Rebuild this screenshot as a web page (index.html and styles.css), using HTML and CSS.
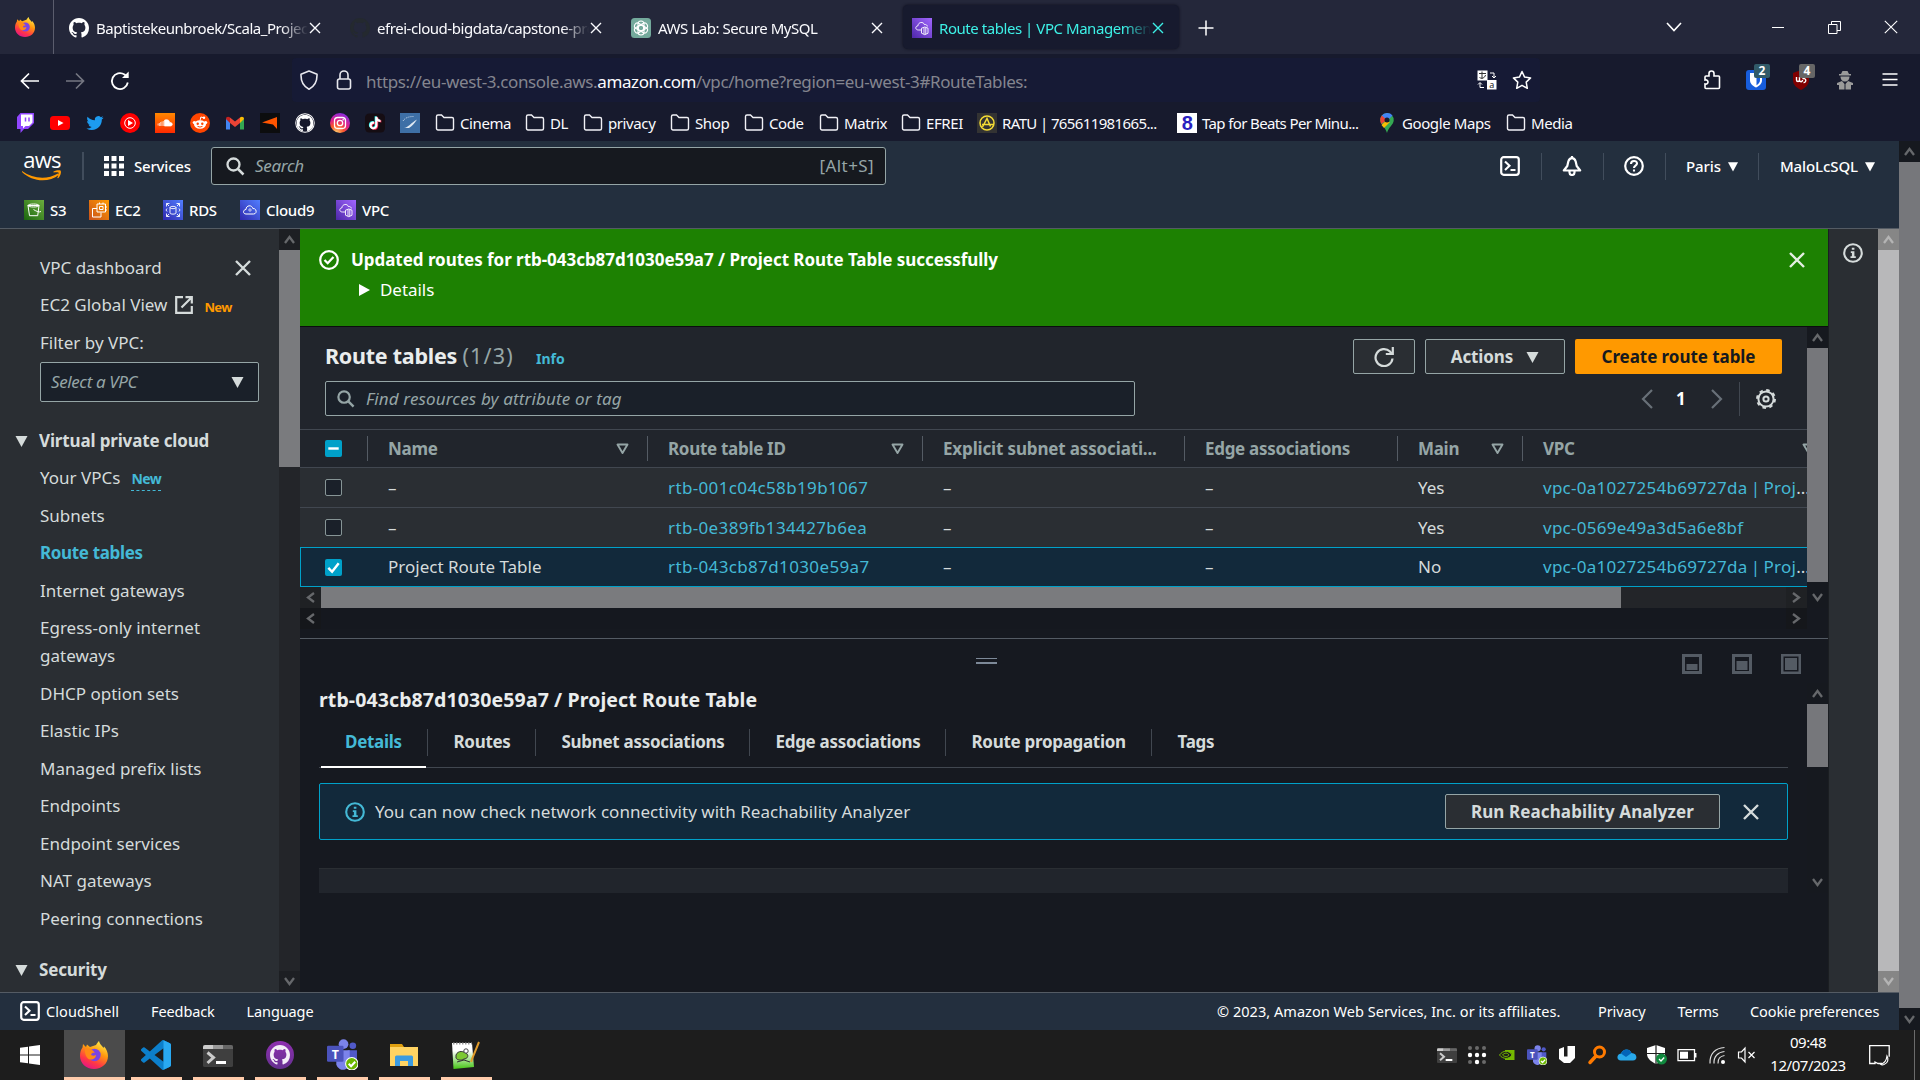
FILE: index.html
```html
<!DOCTYPE html>
<html lang="en">
<head>
<meta charset="utf-8">
<title>Route tables | VPC Management Console</title>
<link rel="stylesheet" href="styles.css">
</head>
<body>
<svg class="defs" width="0" height="0" aria-hidden="true">
  <defs>
    <linearGradient id="g-ff" x1=".8" y1="0" x2=".3" y2="1"><stop offset="0" stop-color="#fff44f"/><stop offset=".4" stop-color="#ff980e"/><stop offset=".75" stop-color="#ff3647"/><stop offset="1" stop-color="#e31587"/></linearGradient>
    <linearGradient id="g-vpc" x1="0" y1="1" x2="1" y2="0"><stop offset="0" stop-color="#4d27a8"/><stop offset="1" stop-color="#a166ff"/></linearGradient>
    <linearGradient id="g-s3" x1="0" y1="1" x2="1" y2="0"><stop offset="0" stop-color="#1b660f"/><stop offset="1" stop-color="#6cae3e"/></linearGradient>
    <linearGradient id="g-ec2" x1="0" y1="1" x2="1" y2="0"><stop offset="0" stop-color="#c8511b"/><stop offset="1" stop-color="#ff9900"/></linearGradient>
    <linearGradient id="g-rds" x1="0" y1="1" x2="1" y2="0"><stop offset="0" stop-color="#2e27ad"/><stop offset="1" stop-color="#527fff"/></linearGradient>
    <linearGradient id="g-sc" x1="0" y1="0" x2="0" y2="1"><stop offset="0" stop-color="#ff8800"/><stop offset="1" stop-color="#ff2a00"/></linearGradient>
    <radialGradient id="g-ig" cx=".3" cy="1" r="1.1"><stop offset="0" stop-color="#fed373"/><stop offset=".35" stop-color="#f9572b"/><stop offset=".6" stop-color="#e0218a"/><stop offset="1" stop-color="#7a2ff0"/></radialGradient>
    <linearGradient id="g-gd" x1="0" y1="0" x2="0" y2="1"><stop offset="0" stop-color="#8e2fb0"/><stop offset="1" stop-color="#65308f"/></linearGradient>
    <linearGradient id="g-npp" x1="0" y1="0" x2="0" y2="1"><stop offset=".3" stop-color="#fff"/><stop offset="1" stop-color="#45c515"/></linearGradient>

    <symbol id="firefox" viewBox="0 0 28 28">
      <path d="M16 4C17 2 18 1 19 0c.4 3 3 4.500 4.500 7l.6-1.500C26.500 8 28 11.500 28 15c0 7.500-6 13-14 13S0 22 0 15c0-4 1.200-7 2.500-8.500L3 3l3 3 1-2.500L10 6z" fill="url(#g-ff)"/>
      <circle cx="14.500" cy="14" r="6.200" fill="#7a45e5"/>
      <path d="M5 8c4-1.500 8 .5 10 4-2-.5-3 0-4 1.500 1 1.500 3 1.500 5 .500 0 3-3 5-6 4.500C6 17.500 4.500 12 5 8z" fill="#ff8a16"/>
    </symbol>
    <symbol id="github" viewBox="0 0 16 16"><path d="M8 0C3.580 0 0 3.580 0 8c0 3.540 2.290 6.530 5.470 7.590.4.07.55-.17.55-.38 0-.19-.01-.82-.01-1.490-2.010.37-2.530-.49-2.690-.94-.09-.23-.48-.94-.82-1.130-.28-.15-.68-.52-.01-.53.63-.01 1.080.58 1.230.82.72 1.210 1.870.87 2.330.66.07-.52.28-.87.51-1.070-1.780-.2-3.640-.89-3.640-3.950 0-.87.31-1.590.82-2.150-.08-.2-.36-1.020.08-2.120 0 0 .67-.21 2.200.82.64-.18 1.320-.27 2-.27s1.360.09 2 .27c1.530-1.040 2.200-.82 2.200-.82.44 1.100.16 1.920.08 2.120.51.56.82 1.270.82 2.150 0 3.070-1.870 3.750-3.650 3.950.29.25.54.73.54 1.480 0 1.070-.01 1.930-.01 2.200 0 .21.15.46.55.38A8.010 8.010 0 0 0 16 8c0-4.420-3.580-8-8-8z" fill="currentColor"/></symbol>
    <symbol id="openai" viewBox="0 0 20 20"><rect width="20" height="20" rx="3.500" fill="#74aa9c"/><g fill="none" stroke="#fff" stroke-width="1.100"><rect x="7" y="3" width="6" height="10" rx="3"/><rect x="7" y="3" width="6" height="10" rx="3" transform="rotate(60 10 10)"/><rect x="7" y="3" width="6" height="10" rx="3" transform="rotate(120 10 10)"/><rect x="7" y="3" width="6" height="10" rx="3" transform="rotate(180 10 10)"/><rect x="7" y="3" width="6" height="10" rx="3" transform="rotate(240 10 10)"/><rect x="7" y="3" width="6" height="10" rx="3" transform="rotate(300 10 10)"/></g></symbol>
    <symbol id="vpc" viewBox="0 0 20 20"><rect width="20" height="20" fill="url(#g-vpc)"/><g fill="none" stroke="#fff" stroke-width=".9"><path d="M9 12H6.500C3 12 3 8 6 7.800 6 4 11.500 3.300 12.300 6.500c2-.3 3 .8 3 2"/><path d="M9.500 10.200l3.300-1.200 3.200 1.200v5l-3.200 1.500-3.300-1.500zM12 9.500v6.700M13.800 9.500v6.700"/></g></symbol>
    <symbol id="x" viewBox="0 0 12 12"><path d="M1 1l10 10M11 1L1 11" stroke="currentColor" stroke-width="1.400" fill="none"/></symbol>
    <symbol id="xb" viewBox="0 0 18 18"><path d="M2 2l14 14M16 2L2 16" stroke="currentColor" stroke-width="2.400" fill="none"/></symbol>
    <symbol id="folder" viewBox="0 0 20 20"><path d="M1.500 15.500v-12a1.500 1.500 0 0 1 1.500-1.500h3.500l2.500 2.500h8a1.500 1.500 0 0 1 1.500 1.500v9.500a1.500 1.500 0 0 1-1.500 1.500h-14a1.500 1.500 0 0 1-1.500-1.500z" fill="none" stroke="#f1f1f6" stroke-width="1.400"/></symbol>
    <symbol id="tri" viewBox="0 0 12 12"><path d="M0 1h12L6 12z" fill="currentColor"/></symbol>
    <symbol id="trio" viewBox="0 0 13 12"><path d="M1.500 1.500h10l-5 8.500z" fill="none" stroke="currentColor" stroke-width="1.900" stroke-linejoin="round"/></symbol>
    <symbol id="mag" viewBox="0 0 20 20"><circle cx="8.500" cy="8.500" r="6" fill="none" stroke="currentColor" stroke-width="2.300"/><path d="M13 13l5.500 5.500" stroke="currentColor" stroke-width="2.500"/></symbol>
    <symbol id="shell" viewBox="0 0 20 20"><rect x="1.200" y="1.200" width="17.600" height="17.600" rx="2.500" fill="none" stroke="#fff" stroke-width="2.200"/><path d="M5 5.500l4.500 4.200L5 14M10.500 14h5" fill="none" stroke="#fff" stroke-width="2.100"/></symbol>
    <symbol id="info" viewBox="0 0 20 20"><circle cx="10" cy="10" r="8.800" fill="none" stroke="currentColor" stroke-width="2.100"/><path d="M8.800 4.800h2.600v2H8.800zM7.800 8.300h3.600v5h1.400v1.700H7.500v-1.700h1.400V10H7.800z" fill="currentColor"/></symbol>
    <symbol id="term" viewBox="0 0 30 24"><rect y="2" width="30" height="22" rx="1.500" fill="#3f3f3f"/><path d="M0 4a2 2 0 0 1 2-2h8v4H0z" fill="#ccc"/><path d="M10 2h10v4H10z" fill="#999"/><path d="M20 2h8a2 2 0 0 1 2 2v2H20z" fill="#666"/><path d="M4.500 9.500l6 5-6 5.500" fill="none" stroke="#ccc" stroke-width="3"/><path d="M13 19.500h10" stroke="#fff" stroke-width="3"/></symbol>
    <symbol id="teams" viewBox="0 0 30 30"><circle cx="16" cy="5" r="4.700" fill="#7b83eb"/><circle cx="25" cy="6.500" r="3.200" fill="#5059c9"/><path d="M20 11h9v9a5 5 0 0 1-9 3z" fill="#5059c9"/><path d="M9 11h13v10a6.500 6.500 0 0 1-13 4z" fill="#7b83eb"/><rect y="6.500" width="16" height="15.500" rx="1.200" fill="#4b53bc"/><text x="8" y="19" text-anchor="middle" font-family="Noto Sans" font-weight="700" font-size="12" fill="#fff">T</text><circle cx="24" cy="24" r="6" fill="#6bb700" stroke="#fff" stroke-width="1"/><path d="M21 24l2.300 2.300L27.300 22" stroke="#fff" stroke-width="2" fill="none"/></symbol>
    <symbol id="up" viewBox="0 0 11 9"><path d="M1 8l4.500-6L10 8" fill="none" stroke="currentColor" stroke-width="2.300"/></symbol>
  </defs>
</svg>

<header class="tabstrip">
  <div class="pinned"><svg width="20" height="20"><use href="#firefox"/></svg></div>
  <div class="tabs">
    <div class="tab"><svg class="white" width="20" height="20"><use href="#github"/></svg><span class="label">Baptistekeunbroek/Scala_Project</span><svg width="12" height="12"><use href="#x"/></svg></div>
    <div class="tab"><svg class="dim" width="20" height="20"><use href="#github"/></svg><span class="label">efrei-cloud-bigdata/capstone-project</span><svg width="12" height="12"><use href="#x"/></svg></div>
    <div class="tab"><svg width="20" height="20"><use href="#openai"/></svg><span class="label">AWS Lab: Secure MySQL</span><svg width="12" height="12"><use href="#x"/></svg></div>
    <div class="tab active"><svg width="20" height="20"><use href="#vpc"/></svg><span class="label">Route tables | VPC Management</span><svg width="12" height="12"><use href="#x"/></svg></div>
  </div>
  <svg class="newtab" width="16" height="16" viewBox="0 0 16 16"><path d="M8 .5v15M.5 8h15" stroke="#fff" stroke-width="1.500"/></svg>
  <div class="winctl">
    <svg width="16" height="10" viewBox="0 0 16 10"><path d="M1 1l7 7.500L15 1" fill="none" stroke="#fff" stroke-width="1.600"/></svg>
    <svg width="12" height="12" viewBox="0 0 12 12"><path d="M0 6.500h12" stroke="#fff"/></svg>
    <svg width="13" height="13" viewBox="0 0 13 13"><path d="M.5 3.500h8.500v9H.5zM3.500 3.500v-3h9v9H9" fill="none" stroke="#fff"/></svg>
    <svg width="14" height="14" viewBox="0 0 14 14"><path d="M.8.8l12.400 12.400M13.200.8L.8 13.200" stroke="#fff" stroke-width="1.100"/></svg>
  </div>
</header>

<nav class="toolbar">
  <div class="navbtns">
    <svg width="20" height="20" viewBox="0 0 20 20"><path d="M19 10H2M9 2.500L1.500 10 9 17.500" fill="none" stroke="#fff" stroke-width="1.700"/></svg>
    <svg class="faded" width="20" height="20" viewBox="0 0 20 20"><path d="M1 10h17M11 2.500l7.500 7.500-7.500 7.500" fill="none" stroke="#fff" stroke-width="1.700"/></svg>
    <svg width="20" height="20" viewBox="0 0 20 20"><path d="M17.800 11.500A8 8 0 1 1 14.500 3.500L17 5.500" fill="none" stroke="#fff" stroke-width="1.800"/><path d="M18.700.5V7H12z" fill="#fff"/></svg>
  </div>
  <div class="urlbar">
    <svg width="20" height="20" viewBox="0 0 20 20"><path d="M10 1l8 3.200c.3 7-2 12-8 15-6-3-8.300-8-8-15z" fill="none" stroke="#e8e8ee" stroke-width="1.600" stroke-linejoin="round"/></svg>
    <svg width="20" height="20" viewBox="0 0 20 20"><rect x="3.500" y="9" width="13" height="10" rx="2" fill="none" stroke="#e8e8ee" stroke-width="1.600"/><path d="M6 9V5a4 4 0 0 1 8 0v4" fill="none" stroke="#e8e8ee" stroke-width="1.600"/></svg>
    <p class="url">https://eu-west-3.console.aws.<b>amazon.com</b>/vpc/home?region=eu-west-3#RouteTables:</p>
    <svg width="20" height="20" viewBox="0 0 20 20"><rect x=".5" y=".5" width="10" height="10" fill="#fff"/><path d="M2 3.500h7M5 1.500v7.500M2.500 7.500c2 1.500 5.500.5 6-2.500" stroke="#333" fill="none"/><rect x="10" y="10" width="9.500" height="9.500" fill="#fff"/><text x="14.700" y="18" text-anchor="middle" font-family="Noto Sans" font-size="9" fill="#222">a</text><path d="M13 3h4v4.500M15 6l2 2 2-2M7 17.500H3V13M1 14.500l2-2 2 2" fill="none" stroke="#fff"/></svg>
    <svg width="20" height="20" viewBox="0 0 20 20"><path d="M10 1.500l2.600 5.600 6 .8-4.400 4.200 1.100 6.200L10 15.300l-5.300 3 1.100-6.200L1.400 7.900l6-.8z" fill="none" stroke="#fff" stroke-width="1.500" stroke-linejoin="round"/></svg>
  </div>
  <div class="exts">
    <svg width="20" height="20" viewBox="0 0 20 20"><path d="M3 17.500V14c4 .8 4-5 0-4V7a1 1 0 0 1 1-1h3V3.500a2.500 2.500 0 0 1 5 0V6h4.500a1 1 0 0 1 1 1v10.500a1 1 0 0 1-1 1H4a1 1 0 0 1-1-1z" fill="none" stroke="#fff" stroke-width="1.600"/></svg>
    <div class="ext"><svg width="20" height="20" viewBox="0 0 20 20"><rect width="20" height="20" rx="3" fill="#175ddc"/><path d="M4 3h12v7c0 4-3 6-6 7.500C7 16 4 14 4 10z" fill="#fff"/><path d="M10.500 5H14v5c0 2.500-1.500 4-3.500 5.200z" fill="#175ddc"/></svg><span class="badge">2</span></div>
    <div class="ext"><svg width="20" height="20" viewBox="0 0 20 20"><path d="M10 0l8 3v7c0 5-4 8-8 10-4-2-8-5-8-10V3z" fill="#800000"/><path d="M5.500 7v3c0 2 3 2 3 0V7v3c0 2 3 2.500 3 0M11.500 9a2 2 0 1 1 1 3.500" fill="none" stroke="#fff" stroke-width="1.400"/></svg><span class="badge grey">4</span></div>
    <svg width="18" height="20" viewBox="0 0 18 20"><path d="M5 4l1.500-3h5L13 4h2v1.500H3V4zM4.500 6.500h9c0 3-2 5-4.500 5s-4.500-2-4.500-5zM1 13l5-2 2.500 3v5.500H3V15H1zM17 13l-5-2-2.500 3v5.500H15V15h2z" fill="#9a9a9a"/></svg>
    <svg width="16" height="16" viewBox="0 0 16 16"><path d="M.5 2h15M.5 7.500h15M.5 13h15" stroke="#fff" stroke-width="1.600"/></svg>
  </div>
</nav>

<nav class="bookmarks">
  <div class="sites">
    <svg viewBox="0 0 20 20"><path d="M2 4l3.500-4H19v10l-6 6H9l-3.500 4v-4H2z" fill="#9146ff"/><path d="M6 1.500h11.500v8L14 13h-3.500L8 15.500V13H6z" fill="#fff"/><path d="M10.500 4.500v4M14 4.500v4" stroke="#9146ff" stroke-width="1.500"/></svg>
    <svg viewBox="0 0 20 20"><rect y="3" width="20" height="14" rx="3.500" fill="#f00"/><path d="M8 7l5.500 3L8 13z" fill="#fff"/></svg>
    <svg viewBox="-2 -2 28 28"><path d="M23.953 4.570a10 10 0 01-2.825.775 4.958 4.958 0 002.163-2.723c-.951.555-2.005.959-3.127 1.184a4.920 4.920 0 00-8.384 4.482C7.690 8.095 4.067 6.130 1.640 3.162a4.822 4.822 0 00-.666 2.475c0 1.710.87 3.213 2.188 4.096a4.904 4.904 0 01-2.228-.616v.06a4.923 4.923 0 003.946 4.827 4.996 4.996 0 01-2.212.085 4.936 4.936 0 004.604 3.417 9.867 9.867 0 01-6.102 2.105c-.39 0-.779-.023-1.170-.067a13.995 13.995 0 007.557 2.209c9.053 0 13.998-7.496 13.998-13.985 0-.21 0-.42-.015-.63A9.935 9.935 0 0024 4.590z" fill="#1d9bf0"/></svg>
    <svg viewBox="0 0 20 20"><circle cx="10" cy="10" r="10" fill="#f00"/><circle cx="10" cy="10" r="5.300" fill="none" stroke="#fff"/><path d="M8 7l5 3-5 3z" fill="#fff"/></svg>
    <svg viewBox="0 0 20 20"><rect width="20" height="20" fill="url(#g-sc)"/><path d="M9.500 13V7.200c3-1.400 5 .3 5.200 2.300 3.300-.3 3.300 3.500.8 3.500zM8.300 13V8M7 13V8.500M5.700 13V9M4.400 13v-3M3.100 12.500v-2" fill="#fff" stroke="#fff" stroke-width=".7"/></svg>
    <svg viewBox="0 0 20 20"><circle cx="10" cy="10" r="10" fill="#ff4500"/><ellipse cx="10" cy="11.500" rx="6" ry="4.200" fill="#fff"/><circle cx="4.300" cy="9.500" r="1.600" fill="#fff"/><circle cx="15.700" cy="9.500" r="1.600" fill="#fff"/><path d="M10 7.500l.9-3.500 3 .8" stroke="#fff" fill="none"/><circle cx="14" cy="4.800" r="1.200" fill="#fff"/><circle cx="7.700" cy="10.700" r="1.200" fill="#ff4500"/><circle cx="12.300" cy="10.700" r="1.200" fill="#ff4500"/><path d="M7.500 13.300q2.500 1.600 5 0" stroke="#ff4500" fill="none"/></svg>
    <svg viewBox="0 0 20 20"><path d="M1 5.500v11h4V9z" fill="#4285f4"/><path d="M19 5.500v11h-4V9z" fill="#34a853"/><path d="M5 4.500l5 4 5-4V10l-5 4-5-4z" fill="#ea4335"/><path d="M15 4.500c2-1.500 4-.5 4 1.500l-4 4z" fill="#fbbc04"/><path d="M5 4.500C3 3 1 4 1 6l4 4z" fill="#c5221f"/></svg>
    <svg viewBox="0 0 20 20"><rect width="20" height="20" fill="#0c0d0e"/><path d="M2 9.500L17 4v12l-4-4.500z" fill="#ff5500"/></svg>
    <svg class="white" viewBox="-.5 -.5 17 17"><circle cx="8" cy="8" r="8.300" fill="#fff"/><circle cx="8" cy="8" r="7.500" fill="#17192c"/><g transform="translate(.8 1) scale(.9)"><use href="#github" width="16" height="16"/></g></svg>
    <svg viewBox="0 0 20 20"><circle cx="10" cy="10" r="10" fill="url(#g-ig)"/><rect x="4.500" y="4.500" width="11" height="11" rx="3.200" fill="none" stroke="#fff" stroke-width="1.300"/><circle cx="10" cy="10" r="2.700" fill="none" stroke="#fff" stroke-width="1.300"/><circle cx="13.200" cy="6.800" r=".8" fill="#fff"/></svg>
    <svg viewBox="-7 -6 38 36"><rect x="-7" y="-6" width="38" height="36" rx="8" fill="#150d13"/><g fill="#25f4ee" transform="translate(-1.200 -1)"><use href="#tt"/></g><g fill="#fe2c55" transform="translate(1.500 1)"><use href="#tt"/></g><g fill="#fff"><path id="tt" d="M12.525.02c1.310-.02 2.610-.01 3.910-.02.08 1.530.63 3.090 1.750 4.170 1.120 1.110 2.700 1.620 4.240 1.790v4.030c-1.440-.05-2.890-.35-4.200-.97-.57-.26-1.100-.59-1.620-.93-.01 2.920.01 5.840-.02 8.750-.08 1.400-.54 2.790-1.350 3.940-1.310 1.920-3.580 3.170-5.910 3.210-1.430.08-2.860-.31-4.080-1.030-2.020-1.190-3.440-3.370-3.650-5.710-.02-.5-.03-1-.01-1.490.18-1.900 1.120-3.720 2.580-4.960 1.660-1.440 3.980-2.130 6.150-1.720.02 1.480-.04 2.960-.04 4.440-.99-.32-2.150-.23-3.020.37-.63.41-1.110 1.040-1.360 1.750-.21.51-.15 1.070-.14 1.610.24 1.640 1.820 3.020 3.500 2.870 1.120-.01 2.190-.66 2.770-1.610.19-.33.4-.67.41-1.060.1-1.790.06-3.570.07-5.360.01-4.030-.01-8.050.02-12.070z"/></g></svg>
    <svg viewBox="0 0 20 20"><rect width="20" height="20" fill="#3e6fa6"/><path d="M4 15c4-.5 7-5 13-8.500-3 4.500-5 6.500-8 8.500z" fill="#dfe8f2"/><path d="M3 8c2-3 5-4.500 11-4.500" fill="none" stroke="#c8d8ea" stroke-dasharray="1 1"/></svg>
  </div>
  <div class="marks">
    <a><svg><use href="#folder"/></svg>Cinema</a>
    <a><svg><use href="#folder"/></svg>DL</a>
    <a><svg><use href="#folder"/></svg>privacy</a>
    <a><svg><use href="#folder"/></svg>Shop</a>
    <a><svg><use href="#folder"/></svg>Code</a>
    <a><svg><use href="#folder"/></svg>Matrix</a>
    <a><svg><use href="#folder"/></svg>EFREI</a>
    <a class="tight"><svg viewBox="0 0 20 20"><rect width="20" height="20" fill="#333"/><circle cx="10" cy="10" r="7" fill="none" stroke="#f5dc35" stroke-width="1.500"/><path d="M5.500 14L10 5.500l3.500 8M5 11.500h12" fill="none" stroke="#f5dc35" stroke-width="1.500"/></svg>RATU | 765611981665...</a>
    <a class="tight"><svg viewBox="0 0 20 20"><rect width="20" height="20" fill="#fff"/><text x="10" y="17" text-anchor="middle" font-family="Liberation Sans" font-weight="700" font-size="20" fill="#2a1fc0">8</text></svg>Tap for Beats Per Minu...</a>
    <a><svg viewBox="0 0 20 20"><path d="M10 0a7 7 0 0 1 6.700 7.500C16.500 12 11.500 14 10 20 8.500 14 3.500 12 3.300 7.500A7 7 0 0 1 10 0z" fill="#34a853"/><path d="M4.500 3A7 7 0 0 1 15.500 2.500L10 8z" fill="#4285f4"/><path d="M4.800 2.600L10 7 4.300 11A8 8 0 0 1 4.800 2.600z" fill="#ea4335"/><path d="M9 8l-4.500 4 2.500 3 6-6z" fill="#fbbc04"/><circle cx="10" cy="7" r="2.500" fill="#17192c"/></svg>Google Maps</a>
    <a><svg><use href="#folder"/></svg>Media</a>
  </div>
</nav>

<div class="viewport">
  <div class="console">
    <header class="awsbar">
      <div class="awslogo"><span>aws</span><svg width="40" height="11" viewBox="0 0 40 11"><path d="M0 1c11 8 25 9 36 2.500l1 1.200C27 13 10 12 0 2z" fill="#f90"/><path d="M31.500 1.500c3-1.500 6-1.500 7.300-.8.700 2-.5 5.500-2.600 7.500l-1-.3c1.200-2.500 1.600-4.500 1.300-5.400-1-.4-3-.3-5 0z" fill="#f90"/></svg></div>
      <i class="sep thick"></i>
      <svg class="grid9" width="20" height="20" viewBox="0 0 20 20"><path d="M0 0h5v5H0zM7.500 0h5v5h-5zM15 0h5v5h-5zM0 7.500h5v5H0zM7.500 7.500h5v5h-5zM15 7.500h5v5h-5zM0 15h5v5H0zM7.500 15h5v5h-5zM15 15h5v5h-5z" fill="#fff"/></svg>
      <span class="services">Services</span>
      <div class="search"><svg width="20" height="20"><use href="#mag"/></svg><em>Search</em><span>[Alt+S]</span></div>
      <div class="awsright">
        <svg width="20" height="20"><use href="#shell"/></svg><i class="sep"></i>
        <svg width="20" height="20" viewBox="0 0 20 20"><path d="M1.800 14.500L5.300 10l1-4.500C7 3.300 8.300 2.200 10 2.200s3 1.100 3.700 3.300l1 4.500 3.500 4.500z" fill="none" stroke="#fff" stroke-width="2.200" stroke-linejoin="round"/><path d="M10 0v2M7.500 15v1.500a2.500 2.500 0 0 0 5 0V15" fill="none" stroke="#fff" stroke-width="2.200"/></svg><i class="sep"></i>
        <svg width="20" height="20" viewBox="0 0 20 20"><circle cx="10" cy="10" r="8.800" fill="none" stroke="#fff" stroke-width="2.200"/><path d="M7 8c0-4 6-4 6-.5 0 2.300-3 2-3 4.500M10 13.500v2" fill="none" stroke="#fff" stroke-width="2.100"/></svg><i class="sep"></i>
        <span class="menu">Paris<svg width="10" height="11"><use href="#tri"/></svg></span><i class="sep"></i>
        <span class="menu">MaloLcSQL<svg width="10" height="11"><use href="#tri"/></svg></span>
      </div>
    </header>
    <div class="favs">
      <a><svg viewBox="0 0 20 20"><rect width="20" height="20" fill="url(#g-s3)"/><path d="M4 5.500h11l-1.300 10.200H5.500zM4 5.500c0-2 11-2 11 0s-11 2-11 0M9.500 9.500c3 2 6 3 7.500 2" fill="none" stroke="#fff" stroke-width="1"/></svg>S3</a>
      <a><svg viewBox="0 0 20 20"><rect width="20" height="20" fill="url(#g-ec2)"/><path d="M8 4h8.500v8H8zM8 8.500H3.500V17H12v-4.500M10.500 6.500h3.500v3h-3.500zM10.500 2.500V4M14 2.500V4M16.500 7H18M16.500 10H18" fill="none" stroke="#fff" stroke-width="1"/></svg>EC2</a>
      <a><svg viewBox="0 0 20 20"><rect width="20" height="20" fill="url(#g-rds)"/><path d="M7 7.500c0-1.500 6-1.500 6 0v5.500c0 1.500-6 1.500-6 0zM7 7.500c0 1.500 6 1.500 6 0M3.500 6.500v-3h3M3.500 3.500L6 6M16.500 6.500v-3h-3M16.500 3.500L14 6M3.500 13.500v3h3M3.500 16.500L6 14M16.500 13.500v3h-3M16.500 16.500L14 14M4 8.500l-1 1.500 1 1.500M16 8.500l1 1.500-1 1.500" fill="none" stroke="#fff" stroke-width=".9"/></svg>RDS</a>
      <a><svg viewBox="0 0 20 20"><rect width="20" height="20" fill="url(#g-rds)"/><path d="M6 14c-3.500 0-3-4.500 0-4.500C6 5 12 4.500 12.800 8.500c4-.5 4.700 5.500.7 5.500z" fill="none" stroke="#fff" stroke-width="1"/><circle cx="10" cy="10" r="1.200" fill="none" stroke="#fff" stroke-width=".7"/></svg>Cloud9</a>
      <a><svg><use href="#vpc"/></svg>VPC</a>
    </div>

    <div class="content">
      <aside class="side">
        <div class="row head"><span>VPC dashboard</span><svg width="18" height="18"><use href="#xb"/></svg></div>
        <div class="row">EC2 Global View<svg class="extlink" width="18" height="18" viewBox="0 0 18 18"><path d="M8 1.200H1.200v15.600h15.600V10M10.500 1.200h6.300v6.300M16.500 1.500L6.500 11.500" fill="none" stroke="currentColor" stroke-width="2.200"/></svg><b class="new orange">New</b></div>
        <div class="row">Filter by VPC:</div>
        <div class="select"><em>Select a VPC</em><svg width="13" height="12"><use href="#tri"/></svg></div>
        <div class="row group"><svg width="13" height="12"><use href="#tri"/></svg><b>Virtual private cloud</b></div>
        <div class="row">Your VPCs<b class="new dashed">New</b></div>
        <div class="row">Subnets</div>
        <div class="row current">Route tables</div>
        <div class="row">Internet gateways</div>
        <div class="row">Egress-only internet<br>gateways</div>
        <div class="row">DHCP option sets</div>
        <div class="row">Elastic IPs</div>
        <div class="row">Managed prefix lists</div>
        <div class="row">Endpoints</div>
        <div class="row">Endpoint services</div>
        <div class="row">NAT gateways</div>
        <div class="row">Peering connections</div>
        <div class="row group second"><svg width="13" height="12"><use href="#tri"/></svg><b>Security</b></div>
      </aside>
      <div class="vbar side-bar"><i class="btn"><svg><use href="#up"/></svg></i><i class="thumb"></i><i class="btn down"><svg><use href="#up"/></svg></i></div>

      <main class="main">
        <section class="flash">
          <svg width="20" height="20" viewBox="0 0 20 20"><circle cx="10" cy="10" r="8.800" fill="none" stroke="#fff" stroke-width="2.200"/><path d="M5.500 10l3.200 3.200L14.500 7" fill="none" stroke="#fff" stroke-width="2.300"/></svg>
          <div class="flashtext"><b>Updated routes for rtb-043cb87d1030e59a7 / Project Route Table successfully</b><p><svg width="11" height="12" viewBox="0 0 11 12"><path d="M0 0l11 6-11 6z" fill="#fff"/></svg>Details</p></div>
          <svg class="close" width="18" height="18"><use href="#xb"/></svg>
        </section>

        <section class="upper">
          <div class="tablepane">
            <div class="tools">
              <h2>Route tables <span>(1/3)</span></h2><b class="infolink">Info</b>
              <div class="btns">
                <button class="btn-n refresh"><svg width="22" height="20" viewBox="0 0 22 20"><path d="M19.500 11.500A8.500 8.500 0 1 1 17 4.500L19 7" fill="none" stroke="currentColor" stroke-width="2.200"/><path d="M19.800 0v7h-7" fill="none" stroke="currentColor" stroke-width="2.200"/></svg></button>
                <button class="btn-n actions">Actions<svg width="13" height="12"><use href="#tri"/></svg></button>
                <button class="btn-p">Create route table</button>
              </div>
            </div>
            <div class="filters">
              <div class="find"><svg width="19" height="19"><use href="#mag"/></svg><em>Find resources by attribute or tag</em></div>
              <div class="pager">
                <svg width="12" height="20" viewBox="0 0 12 20"><path d="M11 1L2 10l9 9" fill="none" stroke="#687078" stroke-width="2.200"/></svg>
                <b>1</b>
                <svg width="12" height="20" viewBox="0 0 12 20"><path d="M1 1l9 9-9 9" fill="none" stroke="#687078" stroke-width="2.200"/></svg>
                <i></i>
                <svg width="20" height="20" viewBox="0 0 20 20"><circle cx="10" cy="10" r="7.600" fill="none" stroke="#d5dbdb" stroke-width="2"/><circle cx="10" cy="10" r="9" fill="none" stroke="#d5dbdb" stroke-width="1.900" stroke-dasharray="3.530 3.530"/><circle cx="10" cy="10" r="2.600" fill="none" stroke="#d5dbdb" stroke-width="2"/></svg>
              </div>
            </div>
            <div class="trow thead">
              <div class="c0"><i class="cb on"><svg viewBox="0 0 18 18"><path d="M3.500 9h11" stroke="#fff" stroke-width="2.600"/></svg></i></div>
              <div>Name<svg width="13" height="12"><use href="#trio"/></svg></div>
              <div>Route table ID<svg width="13" height="12"><use href="#trio"/></svg></div>
              <div class="loose">Explicit subnet associati...</div>
              <div>Edge associations</div>
              <div>Main<svg width="13" height="12"><use href="#trio"/></svg></div>
              <div class="wide">VPC<svg width="13" height="12"><use href="#trio"/></svg></div>
            </div>
            <div class="trow"><div class="c0"><i class="cb"></i></div><div>–</div><div><a>rtb-001c04c58b19b1067</a></div><div>–</div><div>–</div><div>Yes</div><div class="wide"><a>vpc-0a1027254b69727da | Proj</a>...</div></div>
            <div class="trow"><div class="c0"><i class="cb"></i></div><div>–</div><div><a>rtb-0e389fb134427b6ea</a></div><div>–</div><div>–</div><div>Yes</div><div class="wide"><a>vpc-0569e49a3d5a6e8bf</a></div></div>
            <div class="trow sel"><div class="c0"><i class="cb on"><svg viewBox="0 0 18 18"><path d="M3.500 9.500l4 4L14.500 4.500" fill="none" stroke="#fff" stroke-width="2.600"/></svg></i></div><div>Project Route Table</div><div><a>rtb-043cb87d1030e59a7</a></div><div>–</div><div>–</div><div>No</div><div class="wide"><a>vpc-0a1027254b69727da | Proj</a>...</div></div>
            <div class="hbar"><i class="btn left"><svg><use href="#up"/></svg></i><i class="thumb"></i><i class="btn right"><svg><use href="#up"/></svg></i></div>
            <div class="hbar dark"><i class="btn left"><svg><use href="#up"/></svg></i><i class="btn right"><svg><use href="#up"/></svg></i></div>
          </div>
          <div class="vbar upper-bar"><i class="btn"><svg><use href="#up"/></svg></i><i class="thumb"></i><i class="btn down"><svg><use href="#up"/></svg></i></div>
        </section>

        <section class="split">
          <div class="splitbar">
            <i class="handle"></i>
            <div class="sizes">
              <svg viewBox="0 0 20 20"><rect x="1.500" y="1.500" width="17" height="17" fill="none" stroke="#545b64" stroke-width="3"/><rect x="4.500" y="10" width="11" height="6" fill="#545b64"/></svg>
              <svg viewBox="0 0 20 20"><rect x="1.500" y="1.500" width="17" height="17" fill="none" stroke="#545b64" stroke-width="3"/><rect x="4.500" y="7" width="11" height="9" fill="#545b64"/></svg>
              <svg viewBox="0 0 20 20"><rect x="1.250" y="1.250" width="17.500" height="17.500" fill="none" stroke="#545b64" stroke-width="2.500"/><rect x="4" y="4" width="12" height="12" fill="#545b64"/></svg>
            </div>
          </div>
          <div class="splitbody">
            <div class="detail">
              <h3>rtb-043cb87d1030e59a7 / Project Route Table</h3>
              <div class="dtabs"><b class="on">Details</b><b>Routes</b><b>Subnet associations</b><b>Edge associations</b><b>Route propagation</b><b>Tags</b></div>
              <div class="alert"><svg width="20" height="20"><use href="#info"/></svg><span>You can now check network connectivity with Reachability Analyzer</span><button class="btn-n">Run Reachability Analyzer</button><svg class="close" width="18" height="18"><use href="#xb"/></svg></div>
              <div class="card"></div>
            </div>
            <div class="vbar split-bar"><i class="btn"><svg><use href="#up"/></svg></i><i class="thumb"></i><i class="btn down"><svg><use href="#up"/></svg></i></div>
          </div>
        </section>
      </main>
      <aside class="help"><svg width="20" height="20"><use href="#info"/></svg></aside>
      <div class="vbar light-bar"><i class="btn"><svg><use href="#up"/></svg></i><i class="thumb"></i><i class="btn down"><svg><use href="#up"/></svg></i></div>
    </div>

    <footer class="foot"><svg width="20" height="20"><use href="#shell"/></svg><span class="loose">CloudShell</span><span>Feedback</span><span>Language</span><span class="copy">© 2023, Amazon Web Services, Inc. or its affiliates.</span><span>Privacy</span><span>Terms</span><span>Cookie preferences</span></footer>
  </div>
  <div class="vbar page-bar"><i class="btn"><svg><use href="#up"/></svg></i><i class="thumb"></i><i class="btn down"><svg><use href="#up"/></svg></i></div>
</div>

<footer class="taskbar">
  <div class="apps">
    <div class="app start"><svg width="20" height="20" viewBox="0 0 20 20"><path d="M0 2.800l8-1.100v7.800H0zM9 1.500L20 0v9.500H9zM0 10.500h8v7.800l-8-1.100zM9 10.500h11V20L9 18.500z" fill="#fff"/></svg></div>
    <div class="app focus"><svg width="28" height="28"><use href="#firefox"/></svg></div>
    <div class="app"><svg width="30" height="30" viewBox="0 0 24 24"><path d="M23.150 2.587L18.210.21a1.494 1.494 0 0 0-1.705.29l-9.460 8.630-4.120-3.128a.999.999 0 0 0-1.276.057L.327 7.261A1 1 0 0 0 .326 8.740L3.899 12 .326 15.260a1 1 0 0 0 .001 1.479L1.650 17.940a.999.999 0 0 0 1.276.057l4.120-3.128 9.460 8.630a1.492 1.492 0 0 0 1.704.29l4.942-2.377A1.500 1.500 0 0 0 24 20.060V3.939a1.500 1.500 0 0 0-.85-1.352zm-5.146 14.861L10.826 12l7.178-5.448v10.896z" fill="#0c7fcb"/><path d="M18 .2l5.150 2.387A1.500 1.500 0 0 1 24 3.939V20.060a1.500 1.500 0 0 1-.85 1.360L18 23.800z" fill="#29a9f2"/></svg></div>
    <div class="app"><svg width="30" height="24"><use href="#term"/></svg></div>
    <div class="app"><svg class="ghlight" width="28" height="28" viewBox="0 0 28 28"><circle cx="14" cy="14" r="14" fill="url(#g-gd)"/><use href="#github" x="4" y="4" width="20" height="20"/></svg></div>
    <div class="app"><svg width="31" height="31"><use href="#teams"/></svg></div>
    <div class="app"><svg width="28" height="24" viewBox="0 0 28 24"><path d="M0 1h12l2 3v5H0z" fill="#e0a010"/><path d="M0 4h28v19H0z" fill="#ffd362"/><path d="M5 23v-9a1.500 1.500 0 0 1 1.500-1.500h15A1.500 1.500 0 0 1 23 14v9h-5v-5h-8v5z" fill="#3c9be0"/></svg></div>
    <div class="app"><svg width="28" height="28" viewBox="0 0 28 28"><path d="M0 2l20 0 2 24L1.500 28z" fill="url(#g-npp)"/><path d="M1 2.500h19" stroke="#999" stroke-width="2" stroke-dasharray="1.500 1.500"/><path d="M4 14c2-5 8-4 11-1 2 2 0 5-3 5-3 2-7 1-8-1z" fill="#7cc832" stroke="#333"/><circle cx="14" cy="10" r="2.200" fill="#fff" stroke="#444"/><path d="M5 21l7-2 6 2" stroke="#333" fill="none"/><path d="M27 1l-7 17-.8 3" stroke="#e09a2a" stroke-width="2" fill="none"/></svg></div>
  </div>
  <div class="tray">
    <svg viewBox="0 0 30 26"><use href="#term" width="30" height="26"/></svg>
    <svg viewBox="0 0 20 20"><g fill="#6a6a6a"><circle cx="3" cy="3" r="2"/><circle cx="10" cy="3" r="2"/><circle cx="17" cy="3" r="2"/><circle cx="3" cy="17" r="2"/><circle cx="17" cy="17" r="2"/></g><g fill="#fff"><circle cx="3" cy="10" r="2.200"/><circle cx="10" cy="10" r="2.200"/><circle cx="17" cy="10" r="2.200"/><circle cx="10" cy="17" r="2.200"/></g></svg>
    <svg viewBox="0 0 20 20"><path d="M8 5h9.500v10H8z" fill="#76b900"/><path d="M2.500 10C6 5 12 5 15 10c-3 4.500-9 4.500-12.500 0z" fill="#1d1d1d" stroke="#76b900"/><path d="M5.500 10c2-2.500 5-2.500 6.500 0-1.500 2-4.500 2-6.500 0z" fill="none" stroke="#76b900"/></svg>
    <svg><use href="#teams"/></svg>
    <svg viewBox="0 0 20 20"><path d="M2 4l5-2v9.500h3.500V1L18 1v12l-5 5H7l-5-4z" fill="#fff"/></svg>
    <svg viewBox="0 0 20 20"><circle cx="12.500" cy="7" r="5" fill="none" stroke="#ff7a00" stroke-width="3"/><path d="M9 11l-6 6.500" stroke="#ff7a00" stroke-width="3.500" stroke-linecap="round"/></svg>
    <svg viewBox="0 0 20 20"><path d="M4 15.500C-1 15.500-.5 9 4 8.500 6 3.500 12.500 3 14.500 8c6 0 6.500 7.500 1.500 7.500z" fill="#28a8ea"/><path d="M4 8.500C6 3.500 12.500 3 14.500 8L9 12z" fill="#0364b8"/></svg>
    <svg viewBox="0 0 20 20"><path d="M9 0l9 3v6c0 5-5 8-9 10-4-2-9-5-9-10V3z" fill="#fff"/><path d="M9 0v19M0 8.500h18" stroke="#1d1d1d" stroke-width="1.200"/><circle cx="14.500" cy="14" r="5.500" fill="#10893e"/><path d="M12 14l2 2 3.200-3.500" stroke="#fff" fill="none" stroke-width="1.300"/></svg>
    <svg viewBox="0 0 20 20"><path d="M1 4.700h16.500v11H1z" fill="none" stroke="#fff" stroke-width="1.300"/><path d="M18.700 8v4.500" stroke="#fff" stroke-width="1.500"/><path d="M3 6.700h8v7H3z" fill="#fff"/></svg>
    <svg viewBox="0 0 20 20"><path d="M3 18.500C2.500 9 8 3 17.500 2.500M7 18.500c-.5-7 4-11.500 10.500-12M11 18.500c-.3-4.500 2.500-7.500 6.500-8" fill="none" stroke="#ddd" stroke-width="1.200"/><circle cx="16" cy="17" r="2" fill="#fff"/></svg>
    <svg viewBox="0 0 20 20"><path d="M1.500 7h3L8 3v14l-3.500-4h-3zM11.500 7l6 6M17.500 7l-6 6" fill="none" stroke="#fff" stroke-width="1.200"/></svg>
  </div>
  <div class="clock"><span>09:48</span><span>12/07/2023</span></div>
  <svg class="notif" width="21" height="21" viewBox="0 0 21 21"><path d="M13 18.500H9l-3-1.500v1.500H.7V.7h19.500v11" fill="none" stroke="#fff" stroke-width="1.300"/><path d="M18 11c2 3 1 7-3 8.500-1.500.5-3 0-3.500-.5 4-.5 6-3.500 6.500-8z" fill="none" stroke="#fff" stroke-width="1.200"/></svg>
  <i class="peek"></i>
</footer>
</body>
</html>
```
FILE: styles.css
```css
* { box-sizing: border-box; }
html, body { margin: 0; height: 100%; }
body {
  width: 1920px; height: 1080px; overflow: hidden;
  display: flex; flex-direction: column;
  font: 17px/28px "Noto Sans", "Open Sans", sans-serif;
  color: #d5dbdb; background: #16191f;
}
p, h2, h3 { margin: 0; }
svg { display: block; flex: none; }
i { display: block; flex: none; }
.defs { position: absolute; }
.white { color: #fff; }
.ghlight { color: #f4eef8; }

/* browser tabs */
.tabstrip { height: 54px; flex: none; background: #24273a; display: flex; align-items: center; }
.pinned { width: 54px; height: 54px; border-right: 1px solid #5b5d6d; padding: 17px 0 0 15px; }
.tabs { display: flex; gap: 5.500px; margin-left: 6px; }
.tab {
  width: 275.500px; height: 44px; padding: 2px 0 0 9px; border-radius: 5px;
  display: grid; grid-template-columns: 20px 212px 12px; column-gap: 7px; align-items: center;
  font-size: 15px; letter-spacing: -.45px; color: #fbfbfe;
}
.tab > svg:last-child { margin-left: -6px; }
.tab .label { white-space: nowrap; overflow: hidden; -webkit-mask-image: linear-gradient(90deg, #000 185px, transparent 212px); mask-image: linear-gradient(90deg, #000 185px, transparent 212px); }
.tab.active { background: #171a2e; color: #3df0e6; box-shadow: 0 0 3px #0c0e1a; }
.dim { color: #24292f; }
.newtab { margin: 1px 0 0 19px; }
.winctl { margin-left: auto; padding-right: 22px; display: flex; align-items: center; }
.winctl svg:nth-child(1) { margin-right: 90px; }
.winctl svg:nth-child(2) { margin-right: 44px; }
.winctl svg:nth-child(3) { margin-right: 43px; }

/* address bar */
.toolbar { height: 52px; flex: none; background: #171a2d; display: flex; align-items: center; }
.navbtns { display: flex; gap: 25px; margin: 1px 0 0 20px; width: 272px; }
.faded { opacity: .4; }
.urlbar { width: 1248px; height: 44px; background: #161a35; border-radius: 4px; display: flex; align-items: center; padding-left: 7px; }
.urlbar > svg:nth-child(2) { margin-left: 15px; }
.url { margin: 4px 0 0 12px; width: 1111px; font-size: 17px; letter-spacing: -.38px; color: #84858f; }
.url b { font-weight: 400; color: #fbfbfe; }
.urlbar > svg:nth-child(5) { margin-left: 15px; }
.exts { display: flex; align-items: center; margin-left: auto; padding-right: 22px; gap: 25px; }
.exts > svg:nth-child(1) { margin-right: -1px; }
.exts > svg:nth-child(5) { margin-left: 3px; }
.ext { position: relative; }
.badge {
  position: absolute; left: 8px; top: -6px; width: 16px; height: 14px; border-radius: 2px;
  background: #315a68; color: #fff; font-size: 12px; line-height: 13px; font-weight: 700; text-align: center;
}
.badge.grey { background: #666; }

/* bookmarks */
.bookmarks { height: 35px; flex: none; background: #171a2d; display: flex; align-items: center; padding: 0 0 2px 15px; }
.sites { display: flex; gap: 15px; }
.sites svg, .marks svg { width: 20px; height: 20px; }
.marks {
  margin-left: 15px; display: grid;
  grid-template-columns: 90px 58px 87px 74px 75px 82px 76px 200px 200px 129px 90px;
  font-size: 15px; letter-spacing: -.4px; color: #fbfbfe;
}
.marks a { display: flex; align-items: center; gap: 5px; white-space: nowrap; }
.marks .tight { letter-spacing: -.62px; }

.viewport { height: 889px; flex: none; display: flex; }
.console { width: 1899px; display: flex; flex-direction: column; }

/* scrollbars */
.vbar { width: 21px; flex: none; display: flex; flex-direction: column; background: #16191f; }
.btn { width: 21px; height: 21px; display: grid; place-items: center; color: #66686b; }
.btn svg { width: 11px; height: 9px; }
.down { margin-top: auto; }
.down svg { transform: rotate(180deg); }
.left svg { transform: rotate(-90deg); }
.right svg { transform: rotate(90deg); }
.thumb { background: #76777b; }
.page-bar .thumb { height: 846px; }
.page-bar .btn { background: #16191f; }
.side-bar { background: #232529; }
.side-bar .btn { background: #1d1f23; }
.side-bar .thumb { height: 217px; background: #7a7b7e; }
.upper-bar .thumb { height: 234px; }
.split-bar .thumb { height: 63px; }
.light-bar { background: #b8b8ba; }
.light-bar .btn { background: #868686; color: #b4b4b4; }
.light-bar .thumb { height: 0; }

/* console header */
.awsbar { height: 50px; flex: none; background: #232f3e; display: flex; align-items: center; color: #fff; font-size: 15px; font-weight: 500; letter-spacing: -.3px; }
.awslogo { width: 40px; margin: -3px 0 0 22px; height: 28px; display: flex; flex-direction: column; }
.awslogo span { font: 500 22px/16px "Open Sans", sans-serif; letter-spacing: -.8px; text-align: center; }
.awslogo svg { margin-top: 3px; }
.sep { width: 1px; height: 27px; background: #414d5c; }
.sep.thick { width: 2px; height: 28px; margin-left: 20px; }
.grid9 { margin-left: 20px; }
.services { margin-left: 10px; width: 77px; letter-spacing: -.2px; }
.search {
  width: 675px; height: 38px; border: 1px solid #95a5a6; border-radius: 3px; background: #16191f;
  display: flex; align-items: center; padding: 0 11px 0 13px; color: #95a5a6; font-size: 17px; font-weight: 400;
}
.search svg { color: #d5dbdb; }
.search em { margin-left: 10px; }
.search span { margin-left: auto; letter-spacing: .4px; }
.awsright { margin-left: auto; display: flex; align-items: center; padding-right: 24px; gap: 20.500px; }
.awsright .menu { display: flex; align-items: center; gap: 7px; letter-spacing: -.1px; }

.favs { height: 38px; flex: none; background: #232f3e; border-bottom: 1px solid #545b64; display: grid; grid-template-columns: 65px 74px 77px 96px 80px; align-items: start; padding: 5px 0 0 24px; color: #fff; font-size: 15px; font-weight: 500; letter-spacing: -.3px; }
.favs a { display: flex; align-items: center; gap: 6px; }
.favs svg { width: 20px; height: 20px; }

.content { height: 763px; flex: none; display: flex; }

/* left navigation */
.side { width: 279px; background: #2a2e33; padding-top: 20px; }
.row { padding: 4.750px 0 4.750px 40px; min-height: 37.500px; display: flow-root; }
.row svg, .row .new { display: inline-block; vertical-align: middle; }
.row.head { display: flex; justify-content: space-between; align-items: center; padding-right: 27px; }
.extlink { margin: -4px 0 0 8px; }
.new { font-size: 13px; line-height: 18px; margin-left: 11px; letter-spacing: -.6px; color: #44b9d6; }
.new.orange { color: #ff9900; }
.new.dashed { border-bottom: 1px dashed #44b9d6; font-size: 14px; line-height: 22px; margin-left: 11px; }
.select { margin: 0 20px 20.500px 40px; height: 40px; background: #1a2029; border: 1px solid #95a5a6; border-radius: 2px; display: flex; align-items: center; justify-content: space-between; padding: 0 14px 0 10px; }
.select em { color: #95a5a6; letter-spacing: -.4px; }
.row.group { display: flex; align-items: center; gap: 11px; padding-left: 15px; letter-spacing: -.15px; }
.row.second { margin-top: 14px; }
.current { color: #44b9d6; font-weight: 700; letter-spacing: -.35px; }

/* main column */
.main { width: 1528px; background: #161920; display: flex; flex-direction: column; }
.flash { height: 98px; flex: none; background: #1d8102; border-bottom: 1px solid #0b0d0f; display: flex; padding: 17px 22px 0 19px; color: #fff; }
.flash > svg { margin-top: 4px; }
.flash .close { margin-left: auto; color: #e4efe2; margin-top: 5px; }
.flashtext { margin-left: 12px; letter-spacing: -.04px; line-height: 28px; }
.flashtext p { display: flex; align-items: center; gap: 10px; margin: 2px 0 0 8px; }

.upper { height: 312px; flex: none; display: flex; border-bottom: 1px solid #545b64; }
.upper-bar { height: 281px; }
.tablepane { width: 1507px; height: 302px; background: #21252c; }
.tools { height: 48px; padding: 12px 25px 0 25px; display: flex; }
h2 { font-size: 21.500px; line-height: 34px; letter-spacing: -.25px; color: #eaeded; }
h2 span { font-weight: 400; color: #95a5a6; letter-spacing: 1.200px; }
.infolink { margin: 6px 0 0 22px; font-size: 14px; line-height: 28px; color: #44b9d6; }
.btns { margin-left: auto; display: flex; gap: 10px; }
button { font: 700 17px/30px "Noto Sans", sans-serif; height: 35px; border-radius: 2px; padding: 0; display: flex; align-items: center; justify-content: center; }
.btn-n { background: #2a2e33; border: 1px solid #95a5a6; color: #d5dbdb; letter-spacing: .1px; }
.refresh { width: 62px; }
.actions { width: 140px; gap: 13px; letter-spacing: -.1px; }
.btn-p { width: 207px; border: 0; background: #ff9900; color: #16191f; letter-spacing: -.05px; }
.filters { height: 54px; padding: 6px 31px 0 25px; display: flex; justify-content: space-between; }
.find { width: 810px; height: 35px; background: #1a2029; border: 1px solid #95a5a6; border-radius: 2px; display: flex; align-items: center; gap: 11px; padding-left: 10px; color: #95a5a6; }
.find em { letter-spacing: .15px; }
.pager { display: grid; grid-template-columns: 35px 35px 28px 17px 20px; height: 35px; align-items: center; }
.pager b { color: #fff; }
.pager i { width: 1px; height: 34px; background: #414750; }

.trow { display: grid; grid-template-columns: 67px 280px 275px 262px 213px 125px 285px; height: 40px; align-items: center; background: #2a2e33; border-top: 1px solid #414750; overflow: hidden; }
.trow > div { height: 28px; padding-left: 21px; white-space: nowrap; overflow: hidden; }
.trow > .c0, .thead > .c0 { padding-left: 25px; border: 0; display: flex; align-items: center; }
.trow a { color: #44b9d6; letter-spacing: .36px; }
.trow .wide a { letter-spacing: .26px; word-spacing: -1.500px; }
.thead { height: 38px; background: #21252c; color: #95a5a6; font-weight: 700; letter-spacing: -.3px; }
.thead > .loose { letter-spacing: -.15px; }
.thead > div { height: 25px; line-height: 25px; border-left: 1px solid #545b64; padding: 0 18px 0 20px; display: flex; align-items: center; justify-content: space-between; }
.thead > .wide { width: 294px; padding-right: 1px; }
.sel { background: #12293b; border: 1px solid #00a1c9; border-right: 0; }
.sel > .c0 { padding-left: 24px; }
.sel > div:not(.c0) { padding-left: 20px; }
.cb { width: 17px; height: 17px; border: 1px solid #879596; border-radius: 2px; background: #1a2029; }
.cb.on { border: 0; background: #00a1c9; }

.hbar { height: 21px; display: flex; background: #232529; }
.hbar .thumb { width: 1300px; background: #7a7b7e; }
.hbar .right { margin-left: auto; background: #1f2124; }
.hbar .left { background: #1f2124; }
.hbar.dark { background: #15181f; }
.hbar.dark .btn { background: #15171b; }

/* split panel */
.split { height: 353px; background: #161920; }
.splitbar { height: 44px; display: grid; grid-template-columns: 676px 1fr; padding: 15px 27px 0 0; }
.handle { grid-column: 2; grid-row: 1; width: 21px; height: 6px; margin-top: 4px; border: solid #7d8998; border-width: 1px 0 2px; }
.sizes { grid-column: 2; grid-row: 1; justify-self: end; display: flex; gap: 29.500px; }
.sizes svg { width: 20px; height: 20px; }
.splitbody { height: 210px; display: flex; }
.detail { width: 1507px; padding: 0 19px; }
h3 { font-size: 19.500px; line-height: 34px; color: #eaeded; letter-spacing: .11px; }
.dtabs { height: 51px; border-bottom: 1px solid #414750; display: grid; grid-template-columns: 108px 108px 214px 196px 206px 90px; letter-spacing: -.3px; padding-top: 12px; }
.dtabs b { height: 27px; line-height: 26px; padding-left: 25.500px; border-left: 1px solid #414750; }
.dtabs .on { border-left: 0; color: #44b9d6; height: 39px; width: 105px; margin-left: 2px; padding-left: 24px; border-bottom: 2px solid #fff; }
.alert { margin-top: 15px; height: 57px; border: 1px solid #00a1c9; border-radius: 2px; background: #12293b; display: flex; align-items: center; padding: 0 27px 0 25px; }
.alert svg:first-child { color: #44b9d6; }
.alert span { margin-left: 10px; letter-spacing: .03px; }
.alert button { margin-left: auto; width: 275px; }
.alert .close { margin-left: 22px; }
.card { margin-top: 28px; height: 25px; background: #21252c; border-top: 1px solid #2a2e33; }

.help { width: 50px; background: #2a2e33; border-left: 1px solid #1b1e22; padding: 14px 0 0 14px; }

.foot { height: 38px; flex: none; background: #232f3e; border-top: 1px solid #545b64; display: grid; grid-template-columns: 26px 105px 95.500px 970.500px 381px 79.500px 72.500px 140px; align-items: center; padding: 0 0 1px 20px; color: #fff; font-size: 14.500px; letter-spacing: -.1px; white-space: nowrap; }
.foot .loose { letter-spacing: .1px; }
.foot .copy { letter-spacing: .04px; }

/* taskbar */
.taskbar { height: 50px; flex: none; background: #1d1d1d; display: flex; align-items: center; color: #fff; }
.apps { display: flex; gap: 11px; height: 50px; }
.app { width: 51px; height: 50px; display: grid; place-items: center; border-bottom: 3px solid #ffccab; padding: 2px 1px 0 0; }
.app.start { width: 60px; border-color: transparent; margin-right: -7px; }
.app.focus { width: 61px; background: #4b4b4b; margin-right: -5px; }
.tray { margin-left: auto; display: flex; gap: 10px; }
.tray svg { width: 20px; height: 20px; }
.clock { width: 100px; margin: -2px -1px 0 1px; font-size: 15px; line-height: 23px; letter-spacing: -.45px; display: flex; flex-direction: column; align-items: center; }
.notif { margin: 0 24px 0 12px; }
.peek { width: 6px; height: 50px; border-left: 1px solid #6b6b6b; }
```
